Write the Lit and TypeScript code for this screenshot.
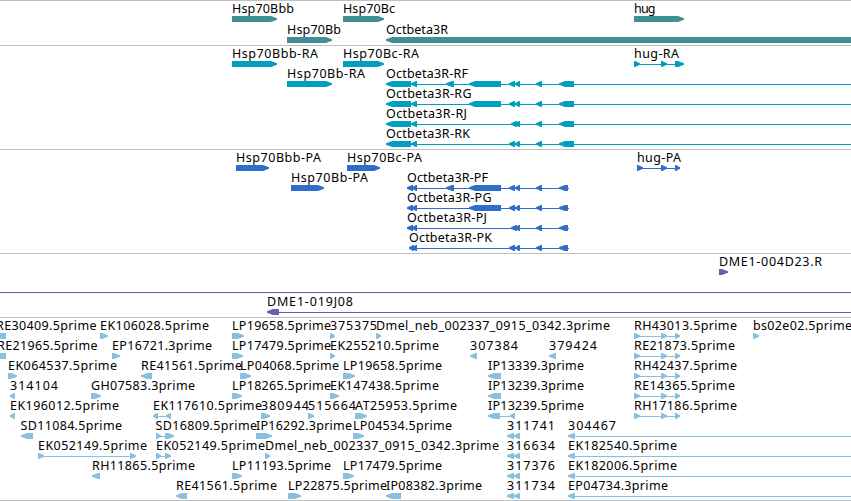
import { LitElement, html, svg, css } from 'lit';
import { customElement, property } from 'lit/decorators.js';

type Exon = [number, number];

interface Feature {
    label?: string;
    x: number; // left edge of the label
    w?: number; // label width
    dir: 1 | -1;
    exons: Exon[];
    line?: Exon;
}

interface Track {
    name: string;
    rows: Feature[][];
}

const END = 860; // features running past the right edge

const fwd = (label: string, x: number, w: number, exons: Exon[], line?: Exon): Feature => ({ label, x, w, dir: 1, exons, line });
const rev = (label: string, x: number, w: number, exons: Exon[], line?: Exon): Feature => ({ label, x, w, dir: -1, exons, line });

const HUG_EST: Exon[] = [[634, 640], [661, 667], [675, 680]];
const PAIR: Exon[] = [[507, 514], [514, 520]];

const TRACKS: Track[] = [
    {
        name: 'gene',
        rows: [
            [
                fwd('Hsp70Bbb', 232, 62, [[232, 277]]),
                fwd('Hsp70Bc', 343, 52, [[343, 384]]),
                fwd('hug', 634, 21.5, [[634, 684]]),
            ],
            [
                fwd('Hsp70Bb', 287, 54, [[287, 332]]),
                rev('Octbeta3R', 386, 62, [[386, END]]),
            ],
        ],
    },
    {
        name: 'transcript',
        rows: [
            [
                fwd('Hsp70Bbb-RA', 232, 86, [[232, 277]]),
                fwd('Hsp70Bc-RA', 343, 76, [[343, 384]]),
                fwd('hug-RA', 634, 45, [[634, 640], [661, 667], [675, 684]], [634, 684]),
            ],
            [
                fwd('Hsp70Bb-RA', 287, 78, [[287, 332]]),
                rev('Octbeta3R-RF', 386, 82, [[386, 411], [411, 417], [446, 454], [469, 501], [509, 515], [515, 520], [536, 542], [559, 574]], [386, END]),
            ],
            [rev('Octbeta3R-RG', 386, 85.5, [[386, 411], [411, 417], [469, 501], [509, 515], [515, 520], [536, 542], [559, 574]], [386, END])],
            [rev('Octbeta3R-RJ', 386, 81, [[386, 411], [411, 417], [511, 517], [515, 520], [536, 542], [559, 574]], [386, END])],
            [rev('Octbeta3R-RK', 386, 84, [[386, 411], [411, 417], [509, 515], [515, 520], [536, 542], [559, 574]], [386, END])],
        ],
    },
    {
        name: 'protein',
        rows: [
            [
                fwd('Hsp70Bbb-PA', 236, 85, [[236, 269]]),
                fwd('Hsp70Bc-PA', 347, 75, [[347, 380]]),
                fwd('hug-PA', 637, 44, [[637, 643], [661, 667], [675, 680]], [637, 680]),
            ],
            [
                fwd('Hsp70Bb-PA', 291, 77, [[291, 324]]),
                rev('Octbeta3R-PF', 407, 81, [[407, 413], [412, 417], [446, 454], [469, 501], [509, 515], [515, 520], [536, 542], [559, 568]], [407, 569]),
            ],
            [rev('Octbeta3R-PG', 407, 84.5, [[407, 413], [412, 417], [469, 501], [509, 515], [515, 520], [536, 542], [559, 568]], [407, 569])],
            [rev('Octbeta3R-PJ', 407, 80, [[407, 413], [412, 417], [511, 517], [515, 520], [536, 542], [559, 568]], [407, 569])],
            [rev('Octbeta3R-PK', 409, 83, [[409, 414], [412, 417], [509, 515], [515, 520], [536, 542], [559, 568]], [409, 569])],
        ],
    },
    {
        name: 'bac',
        rows: [
            [fwd('DME1-004D23.R', 719, 103, [[719, 728]])],
            [{ x: 0, dir: 1, exons: [], line: [0, END] }],
            [rev('DME1-019J08', 267, 86, [[267, 279]], [267, END])],
        ],
    },
    {
        name: 'est',
        rows: [
            [
                rev('RE30409.5prime', -4, 100.5, [[-8, 6]]),
                fwd('EK106028.5prime', 100, 109, [[100, 108]]),
                fwd('LP19658.5prime', 232, 99, [[232, 244]]),
                fwd('375375', 330, 47, [[330, 335]]),
                fwd('Dmel_neb_002337_0915_0342.3prime', 376, 234, [[376, 381]]),
                fwd('RH43013.5prime', 634, 103, HUG_EST, [634, 680]),
                fwd('bs02e02.5prime', 753, 99, [[753, 759]]),
            ],
            [
                rev('RE21965.5prime', -3, 100.5, [[-8, 6]]),
                fwd('EP16721.3prime', 112, 100, [[112, 120]]),
                fwd('LP17479.5prime', 232, 99, [[232, 243]]),
                fwd('EK255210.5prime', 330, 109, [[330, 335]]),
                rev('307384', 470, 48, [[470, 477]]),
                rev('379424', 549, 48, [[549, 556]]),
                fwd('RE21873.5prime', 634, 101, HUG_EST, [634, 680]),
            ],
            [
                fwd('EK064537.5prime', 8, 109, [[8, 17]]),
                rev('RE41561.5prime', 141, 101, [[141, 152]]),
                fwd('LP04068.5prime', 240, 99, [[240, 251]]),
                fwd('LP19658.5prime', 343, 99, [[343, 355]]),
                rev('IP13339.3prime', 488, 96, [[488, 501]]),
                fwd('RH42437.5prime', 634, 103, HUG_EST, [634, 680]),
            ],
            [
                rev('314104', 10, 48, [[10, 15]]),
                fwd('GH07583.3prime', 91, 104, [[91, 101]]),
                fwd('LP18265.5prime', 232, 99, [[232, 242]]),
                fwd('EK147438.5prime', 330, 109, [[330, 339]]),
                rev('IP13239.3prime', 488, 96, [[488, 501]]),
                fwd('RE14365.5prime', 634, 101, HUG_EST, [634, 680]),
            ],
            [
                rev('EK196012.5prime', 10, 109, [[10, 15]]),
                rev('EK117610.5prime', 153, 109, [[153, 158], [166, 171]], [153, 171]),
                fwd('380944', 261, 48, [[261, 270]]),
                fwd('515664', 308, 48, [[308, 314]]),
                fwd('AT25953.5prime', 355, 102, [[355, 367]]),
                rev('IP13239.5prime', 488, 96, [[488, 500], [510, 515]], [488, 515]),
                fwd('RH17186.5prime', 634, 103, HUG_EST, [634, 680]),
            ],
            [
                rev('SD11084.5prime', 20.5, 101.5, [[21, 33]]),
                fwd('SD16809.5prime', 155.5, 101.5, [[156, 161], [165, 174]], [156, 174]),
                fwd('IP16292.3prime', 256, 96, [[256, 272]]),
                fwd('LP04534.5prime', 353, 99, [[353, 364]]),
                rev('311741', 507, 48, PAIR, [507, 520]),
                rev('304467', 568, 48, [[568, 575]], [568, END]),
            ],
            [
                fwd('EK052149.5prime', 38, 109, [[38, 44], [130, 136]], [38, 136]),
                fwd('EK052149.5prime', 156, 109, [[156, 161], [165, 171]], [156, 171]),
                fwd('Dmel_neb_002337_0915_0342.3prime', 265, 234, [[265, 270]]),
                rev('316634', 507, 48, PAIR, [507, 520]),
                rev('EK182540.5prime', 568, 109, [[568, 575]], [568, END]),
            ],
            [
                rev('RH11865.5prime', 92, 103, [[92, 100]]),
                fwd('LP11193.5prime', 232, 99, [[232, 242]]),
                fwd('LP17479.5prime', 343, 99, [[343, 354]]),
                rev('317376', 507, 48, PAIR, [507, 520]),
                rev('EK182006.5prime', 568, 109, [[568, 575]], [568, END]),
            ],
            [
                rev('RE41561.5prime', 176, 101, [[176, 187]]),
                fwd('LP22875.5prime', 288, 99, [[288, 301]]),
                rev('IP08382.3prime', 386, 96, [[386, 401]]),
                rev('311734', 507, 48, PAIR, [507, 520]),
                rev('EP04734.3prime', 568, 100, [[568, 575]], [568, END]),
            ],
        ],
    },
];

@customElement('genome-row')
export class GenomeRow extends LitElement {
    static styles = css`
        :host {
            display: block;
            height: 20px;
        }

        svg {
            display: block;
            width: 100%;
            height: 20px;
            overflow: visible;
        }

        text {
            font-family: 'Noto Sans', 'DejaVu Sans', sans-serif;
            font-size: 12.5px;
            fill: #000;
        }

        .shape {
            fill: var(--feature-color);
        }
    `;

    @property({ attribute: false }) features: Feature[] = [];

    arrow([start, end]: Exon, dir: number) {
        // short exons keep a 1px block behind the head
        const head = Math.min(6, end - start - 1);
        const points = dir > 0
            ? `${ start },15 ${ end - head },15 ${ end },17.2 ${ end },18.8 ${ end - head },21 ${ start },21`
            : `${ end },15 ${ start + head },15 ${ start },17.2 ${ start },18.8 ${ start + head },21 ${ end },21`;
        return svg`<polygon class="shape" points=${ points }></polygon>`;
    }

    feature(f: Feature) {
        return svg`
            ${ f.line ? svg`<rect class="shape" x=${ f.line[0] } y="18" width=${ f.line[1] - f.line[0] } height="1"></rect>` : '' }
            ${ f.exons.map((exon) => this.arrow(exon, f.dir)) }
            ${ f.label ? svg`<text x=${ f.x } y="12" textLength=${ f.w } lengthAdjust="spacing">${ f.label }</text>` : '' }
        `;
    }

    render() {
        return html`<svg>${ this.features.map((f) => this.feature(f)) }</svg>`;
    }
}

@customElement('app-root')
export class AppRoot extends LitElement {
    static styles = css`
        :host {
            display: block;
            width: 851px;
            height: 501px;
            box-sizing: border-box;
            overflow: hidden;
            background: #fff;
            border-bottom: 1px solid #c0c0c0;
        }

        .track {
            display: flex;
            flex-direction: column;
            border-top: 1px solid #c0c0c0;
            padding-bottom: 3px;
        }

        .gene {
            --feature-color: #408f94;
            gap: 1px;
        }

        .transcript {
            --feature-color: #009fbf;
        }

        .protein {
            --feature-color: #2f6dcd;
        }

        .bac {
            --feature-color: #7359a8;
        }

        .est {
            --feature-color: #89bfdf;
            padding-bottom: 2px;
        }
    `;

    render() {
        return TRACKS.map((track) => html`
            <section class="track ${ track.name }">
                ${ track.rows.map((row) => html`<genome-row .features=${ row }></genome-row>`) }
            </section>
        `);
    }
}
